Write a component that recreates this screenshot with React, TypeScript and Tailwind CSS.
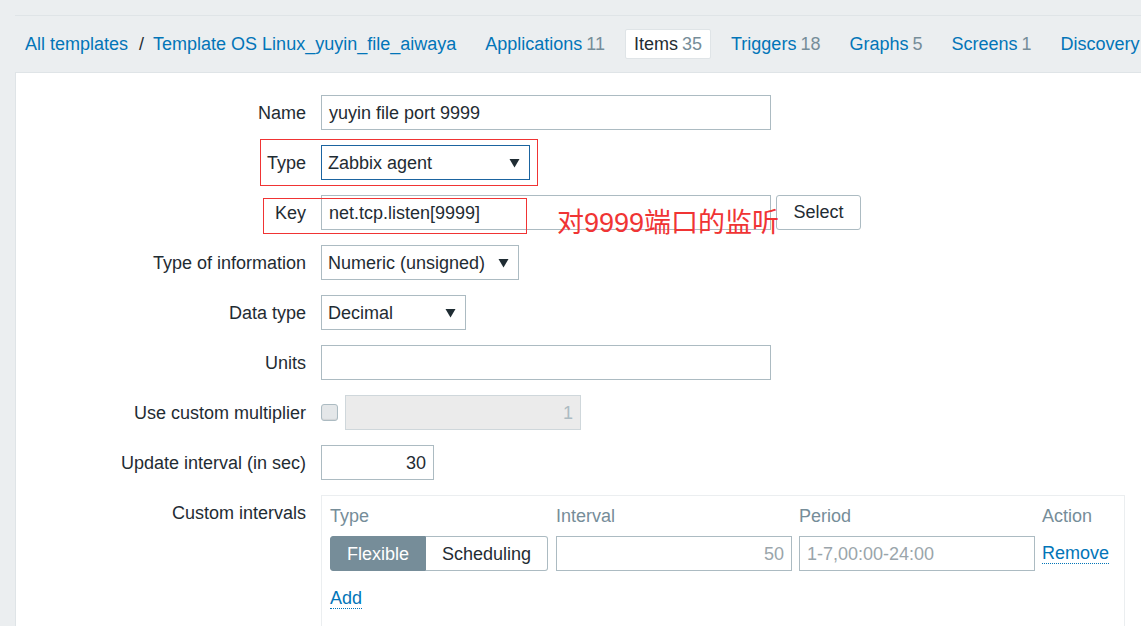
import type { ReactNode } from "react";

const tabs = [
  { name: "Applications", count: "11" },
  { name: "Items", count: "35", active: true },
  { name: "Triggers", count: "18" },
  { name: "Graphs", count: "5" },
  { name: "Screens", count: "1" },
  { name: "Discovery", count: "" },
];

function Arrow() {
  return (
    <svg width="11" height="10" viewBox="0 0 11 10" className="shrink-0">
      <path d="M0.5 1 L10.5 1 L5.5 9.5 Z" fill="#1f2c33" />
    </svg>
  );
}

function Row({ label, children }: { label: string; children: ReactNode }) {
  return (
    <div className="flex items-start">
      <div className="w-[290px] shrink-0 h-[35px] leading-[36px] text-right">{label}</div>
      <div className="ml-[15px] flex items-center">{children}</div>
    </div>
  );
}

function Field({ w, value, right }: { w: string; value?: string; right?: boolean }) {
  return (
    <div
      className={`${w} h-[35px] border border-[#acbbc2] bg-white flex items-center pt-[1px] px-[7px] ${right ? "justify-end" : ""}`}
    >
      {value}
    </div>
  );
}

function Select({ w, value, focused }: { w: string; value: string; focused?: boolean }) {
  return (
    <div
      className={`${w} h-[35px] border ${focused ? "border-[#1b64a0]" : "border-[#acbbc2]"} bg-white flex items-center justify-between pt-[1px] pl-[6px] pr-[9px]`}
    >
      <span>{value}</span>
      <Arrow />
    </div>
  );
}

export default function App() {
  return (
    <div className="relative min-h-screen overflow-hidden bg-[#ebeef0] pl-[15px] pt-[15px] font-['Liberation_Sans',Arial,sans-serif] text-[18px] text-[#1f2c33]">
      {/* header nav */}
      <div className="h-[57px] border-t border-[#dfe4e7] flex items-center pl-[10px] whitespace-nowrap">
        <a className="text-[#0275b8]">All templates</a>
        <span className="ml-[11px] mr-[9px] text-[#1f2c33]">/</span>
        <a className="text-[#0275b8]">Template OS Linux_yuyin_file_aiwaya</a>
        <div className="ml-[20px] flex items-center gap-[11px]">
          {tabs.map((t) => (
            <div
              key={t.name}
              className={`h-[30px] px-[8px] flex items-center border rounded-[2px] ${t.active ? "bg-white border-[#dfe4e7]" : "border-transparent"}`}
            >
              <span className={t.active ? "text-[#1f2c33]" : "text-[#0275b8]"}>{t.name}</span>
              {t.count && <span className="ml-[4px] text-[#768d99]">{t.count}</span>}
            </div>
          ))}
        </div>
      </div>

      {/* form panel */}
      <div className="bg-white border-t border-l border-[#dfe4e7] pt-[22px] pb-[40px]">
        <div className="flex flex-col gap-[15px]">
          <Row label="Name">
            <Field w="w-[450px]" value="yuyin file port 9999" />
          </Row>
          <Row label="Type">
            <Select w="w-[209px]" value="Zabbix agent" focused />
          </Row>
          <Row label="Key">
            <Field w="w-[450px]" value="net.tcp.listen[9999]" />
            <button className="ml-[5px] h-[35px] w-[85px] border border-[#acbbc2] rounded-[3px] bg-white text-[#1f2c33]">
              Select
            </button>
          </Row>
          <Row label="Type of information">
            <Select w="w-[198px]" value="Numeric (unsigned)" />
          </Row>
          <Row label="Data type">
            <Select w="w-[145px]" value="Decimal" />
          </Row>
          <Row label="Units">
            <Field w="w-[450px]" />
          </Row>
          <Row label="Use custom multiplier">
            <div className="w-[17px] h-[17px] rounded-[3px] border border-[#acbbc2] bg-[#e4e7e9] shadow-[inset_0_-1px_1px_rgba(0,0,0,0.08)]" />
            <div className="ml-[7px] w-[236px] h-[35px] border border-[#cfd7db] bg-[#ebebeb] flex items-center justify-end pt-[1px] px-[7px] text-[#acbbc2]">
              1
            </div>
          </Row>
          <Row label="Update interval (in sec)">
            <Field w="w-[113px]" value="30" right />
          </Row>
          <Row label="Custom intervals">
            <div className="w-[804px] border border-[#ebeef0] pl-[8px] pt-[4px] pb-[30px]">
              <div className="grid grid-cols-[219px_236px_236px_auto] gap-x-[7px] text-[#768d99]">
                <div className="h-[32px] leading-[33px]">Type</div>
                <div className="h-[32px] leading-[33px]">Interval</div>
                <div className="h-[32px] leading-[33px]">Period</div>
                <div className="h-[32px] leading-[33px]">Action</div>
              </div>
              <div className="mt-[4px] grid grid-cols-[219px_236px_236px_auto] gap-x-[7px] items-center">
                <div className="flex h-[35px]">
                  <div className="w-[96px] flex items-center justify-center pt-[1px] bg-[#768d99] border border-[#768d99] rounded-l-[3px] text-white">
                    Flexible
                  </div>
                  <div className="w-[122px] flex items-center justify-center pt-[1px] bg-white border border-l-0 border-[#acbbc2] rounded-r-[3px]">
                    Scheduling
                  </div>
                </div>
                <div className="h-[35px] border border-[#acbbc2] flex items-center justify-end pt-[1px] px-[7px] text-[#9aa5ab]">
                  50
                </div>
                <div className="h-[35px] border border-[#acbbc2] flex items-center pt-[1px] px-[7px] text-[#9aa5ab]">
                  1-7,00:00-24:00
                </div>
                <div>
                  <span className="text-[#0275b8] border-b border-dotted border-[#0275b8] leading-[20px] inline-block">
                    Remove
                  </span>
                </div>
              </div>
              <div className="mt-[14px]">
                <span className="text-[#0275b8] border-b border-dotted border-[#0275b8] leading-[20px] inline-block">
                  Add
                </span>
              </div>
            </div>
          </Row>
        </div>
      </div>

      {/* red annotations */}
      <div className="absolute left-[260px] top-[139px] w-[278px] h-[47px] border border-[#f03434]" />
      <div className="absolute left-[263px] top-[198px] w-[264px] h-[36px] border border-[#f03434]" />
      <div className="absolute left-[557px] top-[205px] text-[27px] leading-[36px] text-[#f03434] font-['Liberation_Sans','Noto_Sans_CJK_SC',sans-serif] whitespace-nowrap">
        对9999端口的监听
      </div>
    </div>
  );
}
